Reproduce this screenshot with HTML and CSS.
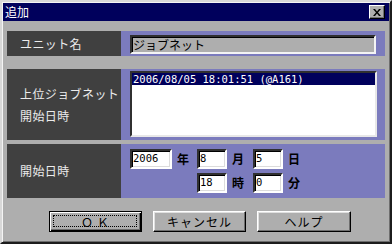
FILE: index.html
```html
<!DOCTYPE html>
<html lang="ja">
<head>
  <meta charset="UTF-8" />
  <title>追加</title>
  <link rel="stylesheet" href="styles.css">
</head>
<body>

  <div class="dialog">
    <div class="titlebar">
      <span class="title">追加</span>
      <span class="close">
        <svg width="8" height="7" viewBox="0 0 8 7">
          <path d="M0 0h2l2 2.5L6 0h2L5 3.5 8 7H6L4 4.5 2 7H0l3-3.5z" fill="#000"/>
        </svg>
      </span>
    </div>

    <div class="form">
      <div class="row row-unit">
        <div class="label">ユニット名</div>
        <div class="field">
          <div class="textbox readonly">ジョブネット</div>
        </div>
      </div>

      <div class="row row-parent">
        <div class="label">上位ジョブネット<br>開始日時</div>
        <div class="field">
          <div class="listbox">
            <div class="item selected">2006/08/05 18:01:51 (@A161)</div>
          </div>
        </div>
      </div>

      <div class="row row-start">
        <div class="label">開始日時</div>
        <div class="field date-grid">
          <div class="textbox num year">2006</div>
          <span class="unit">年</span>
          <div class="textbox num">8</div>
          <span class="unit">月</span>
          <div class="textbox num">5</div>
          <span class="unit">日</span>

          <div class="textbox num hour">18</div>
          <span class="unit">時</span>
          <div class="textbox num">0</div>
          <span class="unit">分</span>
        </div>
      </div>
    </div>

    <div class="buttons">
      <div class="btn default"><span class="focus">ＯＫ</span></div>
      <div class="btn">キャンセル</div>
      <div class="btn help">ヘルプ</div>
    </div>
  </div>

</body>
</html>
```

FILE: styles.css
```css
* {
  box-sizing: border-box;
}

body {
  margin: 0;
  font-family: "Noto Sans CJK JP", sans-serif;
  font-size: 12px;
  color: #000;
}

.dialog {
  width: 392px;
  height: 244px;
  background: #aeaeae;
  border: 2px solid;
  border-color: #d8d8d8 #1c1c1c #1c1c1c #d8d8d8;
  padding: 1px;
  box-shadow: inset 1px 1px #f4f4f4, inset -1px -1px #6e6e6e;
}

/* barra de título */
.titlebar {
  height: 18px;
  background: #00005c;
  display: flex;
  align-items: center;
  justify-content: space-between;
  padding: 0 4px 0 2px;
  color: #fff;
}

.title {
  font-size: 12px;
  line-height: 18px;
}

.close {
  width: 16px;
  height: 14px;
  background: #aeaeae;
  border: 1px solid;
  border-color: #fff #000 #000 #fff;
  box-shadow: inset -1px -1px #707070;
  display: flex;
  align-items: center;
  justify-content: center;
}

/* linhas do formulário */
.form {
  padding: 10px 4px 0;
}

.row {
  display: grid;
  grid-template-columns: 114px 1fr;
}

.row-unit {
  height: 25px;
}

.row-parent {
  height: 71px;
  margin-top: 13px;
}

.row-start {
  height: 54px;
  margin-top: 4px;
}

.label {
  background: #404040;
  color: #ececec;
  display: flex;
  align-items: center;
  padding-left: 13px;
  letter-spacing: 0.4px;
  line-height: 22px;
}

.field {
  background: #7b7bbd;
}

.row-unit .field {
  padding: 4px 9px 2px;
}

.row-parent .field {
  padding: 2px 8px 3px 9px;
}

.textbox {
  height: 100%;
  background: #fff;
  border: 2px solid;
  border-color: #303030 #fff #fff #303030;
  box-shadow: inset 1px 1px #000, inset -1px -1px #dcdcdc;
  padding: 0 1px;
  line-height: 15px;
  white-space: nowrap;
}

.textbox.readonly {
  background: #aeaeae;
  box-shadow: inset 1px 1px #000;
  border-right-color: #f4f4f4;
  border-bottom-color: #f4f4f4;
}

.listbox {
  height: 100%;
  background: #fff;
  border: 2px solid;
  border-color: #303030 #e8e8e8 #e8e8e8 #303030;
  padding: 0;
}

.item {
  font-family: "DejaVu Sans Mono", monospace;
  font-size: 10.5px;
  line-height: 12px;
  padding-left: 1px;
}

.item.selected {
  background: #00005c;
  color: #fff;
}

/* data de início */
.date-grid {
  padding: 5px 9px;
  display: grid;
  grid-template-columns: 42px 25px 30px 26px 30px auto;
  grid-template-rows: 20px 20px;
  row-gap: 4px;
}

.num {
  font-family: "DejaVu Sans Mono", monospace;
  font-size: 10.5px;
  line-height: 15px;
}

.hour {
  grid-column: 3;
}

.unit {
  font-weight: bold;
  font-size: 12px;
  line-height: 20px;
  padding-left: 5px;
}

/* botões */
.buttons {
  display: flex;
  gap: 11px;
  padding-left: 46px;
  margin-top: 13px;
}

.btn {
  width: 93px;
  height: 21px;
  background: #aeaeae;
  border: 1px solid;
  border-color: #fff #000 #000 #fff;
  box-shadow: inset -1px -1px #6e6e6e, inset 1px 1px #e0e0e0;
  display: flex;
  align-items: center;
  justify-content: center;
  letter-spacing: 1px;
}

.btn.help {
  width: 94px;
}

.btn.default {
  border: 1px solid #000;
  box-shadow: inset 1px 1px #fff, inset -1px -1px #000, inset -2px -2px #6e6e6e;
  padding: 2px;
}

.focus {
  flex: 1;
  align-self: stretch;
  margin: 1px 2px 2px 1px;
  border: 1px dotted #000;
  display: flex;
  align-items: center;
  justify-content: center;
  letter-spacing: 4px;
  padding-left: 4px;
}
```
